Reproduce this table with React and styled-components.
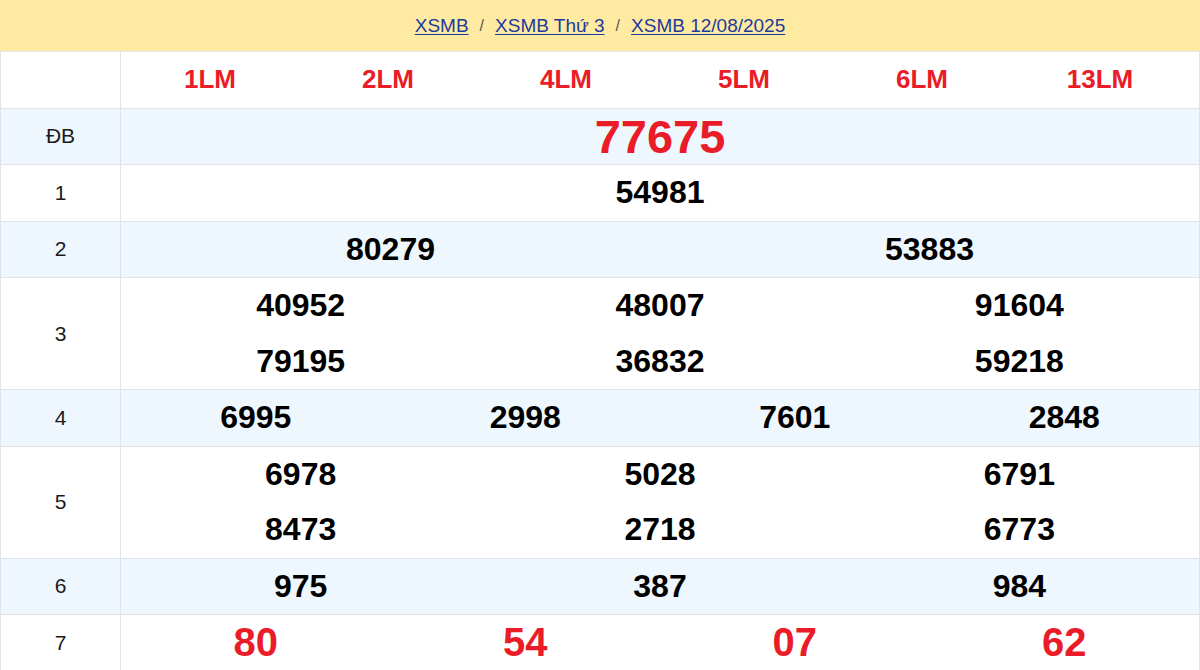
import React from "react"
import styled, { createGlobalStyle } from "styled-components"

const GlobalStyle = createGlobalStyle`
    html, body {
        margin: 0;
        padding: 0;
        background: #ffffff;
        font-family: "Liberation Sans", Arial, sans-serif;
    }
`;

const crumbs = ["XSMB", "XSMB Thứ 3", "XSMB 12/08/2025"];
const tails = ["1LM", "2LM", "4LM", "5LM", "6LM", "13LM"];

const prizes = [
    { label: "ĐB", cols: 1, nums: ["77675"], kind: "special" },
    { label: "1", cols: 1, nums: ["54981"] },
    { label: "2", cols: 2, nums: ["80279", "53883"] },
    { label: "3", cols: 3, nums: ["40952", "48007", "91604", "79195", "36832", "59218"] },
    { label: "4", cols: 4, nums: ["6995", "2998", "7601", "2848"] },
    { label: "5", cols: 3, nums: ["6978", "5028", "6791", "8473", "2718", "6773"] },
    { label: "6", cols: 3, nums: ["975", "387", "984"] },
    { label: "7", cols: 4, nums: ["80", "54", "07", "62"], kind: "last" },
];

const App = () => {
    return (
        <>
            <GlobalStyle />
            <Page>
                <Breadcrumb>
                    {crumbs.map((c, i) =>
                        <React.Fragment key={c}>
                            {i > 0 && <Sep>/</Sep>}
                            <Crumb href="#">{c}</Crumb>
                        </React.Fragment>
                    )}
                </Breadcrumb>
                <Table>
                    <Row>
                        <Label />
                        <Values cols={6} inset>
                            {tails.map(t => <Tail key={t}>{t}</Tail>)}
                        </Values>
                    </Row>
                    {prizes.map((p, index) =>
                        <Row key={p.label} shaded={index % 2 === 0}>
                            <Label>{p.label}</Label>
                            <Values cols={p.cols}>
                                {p.nums.map((n, i) => <Num key={i} kind={p.kind}>{n}</Num>)}
                            </Values>
                        </Row>
                    )}
                </Table>
            </Page>
        </>
    )
}

const Page = styled.div`
    width: 1200px;
`;

const Breadcrumb = styled.nav`
    height: 51px;
    background: #ffeaa1;
    border-bottom: 1px solid #e3e5ea;
    display: flex;
    align-items: center;
    justify-content: center;
    font-size: 19px;
`;

const Crumb = styled.a`
    color: #1d3a9c;
    text-decoration: underline;
    text-underline-offset: 2px;
`;

const Sep = styled.span`
    color: #555555;
    font-size: 16px;
    margin: 0 11px;
`;

const Table = styled.div`
    border-left: 1px solid #e0e3e8;
    border-right: 1px solid #e0e3e8;
    box-sizing: border-box;
    width: 1200px;
`;

const Row = styled.div`
    display: grid;
    grid-template-columns: 120px 1fr;
    background: ${props => props.shaded ? "#eef6fe" : "#ffffff"};
    border-bottom: 1px solid #e0e3e8;
`;

const Label = styled.div`
    border-right: 1px solid #e0e3e8;
    display: flex;
    align-items: center;
    justify-content: center;
    font-size: 21px;
    color: #1a1a1a;
`;

const Values = styled.div`
    display: grid;
    grid-template-columns: repeat(${props => props.cols}, 1fr);
    padding: ${props => props.inset ? "0 10px 0 0" : "0"};
`;

const Tail = styled.div`
    height: 55.5px;
    display: flex;
    align-items: center;
    justify-content: center;
    color: #ea1c27;
    font-weight: bold;
    font-size: 26px;
`;

const Num = styled.div`
    height: 55.5px;
    display: flex;
    align-items: center;
    justify-content: center;
    font-weight: bold;
    color: ${props => props.kind ? "#ea1c27" : "#000000"};
    font-size: ${props => props.kind === "special" ? "47px" : props.kind === "last" ? "40px" : "32px"};
`;

export default App;
